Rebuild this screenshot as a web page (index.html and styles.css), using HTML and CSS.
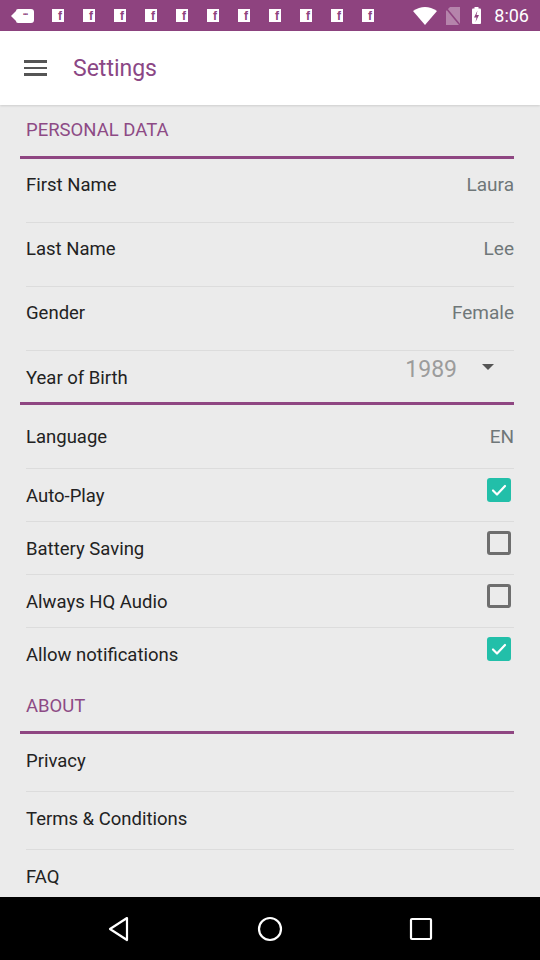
FILE: index.html
```html
<!DOCTYPE html>
<html>
<head>
<meta charset="utf-8">
<link rel="stylesheet" href="styles.css">
</head>
<body>
<div class="screen">
  <div class="statusbar">
    <div class="sb-left">
      <span class="bubble"><span class="dots">•••</span></span>
      <span class="fb">f</span><span class="fb">f</span><span class="fb">f</span><span class="fb">f</span><span class="fb">f</span><span class="fb">f</span><span class="fb">f</span><span class="fb">f</span><span class="fb">f</span><span class="fb">f</span><span class="fb">f</span>
    </div>
    <div class="sb-right">
      <svg class="wifi" width="24" height="18" viewBox="0 0 24 18"><path d="M0 4 Q12 -4 24 4 L12 18 Z" fill="#fff"/></svg>
      <svg class="sim" width="14" height="18" viewBox="0 0 14 18"><path d="M4 0 H14 V18 H0 V4 Z" fill="#fff" fill-opacity="0.35"/><path d="M0 1 L14 18" stroke="#8e437f" stroke-width="1.6"/></svg>
      <svg class="batt" width="9" height="17" viewBox="0 0 9 17"><rect x="2.5" y="0" width="4" height="2" fill="#fff"/><rect x="0" y="1.5" width="9" height="15.5" rx="1" fill="#fff"/><path d="M5.5 3.5 L2 10.5 H4.5 L3.5 15 L7 8 H4.5 Z" fill="#8e437f"/></svg>
      <span class="time">8:06</span>
    </div>
  </div>

  <div class="toolbar">
    <div class="hamburger"><span></span><span></span><span></span></div>
    <div class="title">Settings</div>
  </div>

  <div class="content">
    <div class="section-head">PERSONAL DATA</div>
    <div class="row r64"><span class="label">First Name</span><span class="value">Laura</span></div>
    <div class="row r64"><span class="label">Last Name</span><span class="value">Lee</span></div>
    <div class="row r64"><span class="label">Gender</span><span class="value">Female</span></div>
    <div class="row year">
      <span class="label">Year of Birth</span>
      <span class="year-val">1989</span>
      <span class="caret"></span>
    </div>
    <div class="row lang"><span class="label">Language</span><span class="value">EN</span></div>
    <div class="row check"><span class="label">Auto-Play</span><span class="box on"><svg width="24" height="24" viewBox="0 0 24 24"><path d="M6 12.5 L10 16.5 L18 8" fill="none" stroke="#fff" stroke-width="2.2" stroke-linecap="round" stroke-linejoin="round"/></svg></span></div>
    <div class="row check"><span class="label">Battery Saving</span><span class="box off"></span></div>
    <div class="row check"><span class="label">Always HQ Audio</span><span class="box off"></span></div>
    <div class="row check last"><span class="label">Allow notifications</span><span class="box on"><svg width="24" height="24" viewBox="0 0 24 24"><path d="M6 12.5 L10 16.5 L18 8" fill="none" stroke="#fff" stroke-width="2.2" stroke-linecap="round" stroke-linejoin="round"/></svg></span></div>
    <div class="section-head about">ABOUT</div>
    <div class="row link"><span class="label">Privacy</span></div>
    <div class="row link"><span class="label">Terms &amp; Conditions</span></div>
    <div class="row link last"><span class="label">FAQ</span></div>
  </div>

  <div class="navbar">
    <svg width="24" height="26" viewBox="0 0 24 26"><path d="M20 2 L3 13 L20 24 Z" fill="none" stroke="#fff" stroke-width="2.2" stroke-linejoin="round"/></svg>
    <svg width="26" height="26" viewBox="0 0 26 26"><circle cx="13" cy="13" r="11" fill="none" stroke="#fff" stroke-width="2.2"/></svg>
    <svg width="24" height="24" viewBox="0 0 24 24"><rect x="2" y="2" width="20" height="20" rx="1" fill="none" stroke="#fff" stroke-width="2.2"/></svg>
  </div>
</div>
</body>
</html>
```

FILE: styles.css
```css
* { box-sizing: border-box; }
html, body { margin: 0; padding: 0; }
body {
  width: 540px;
  height: 960px;
  overflow: hidden;
  font-family: Roboto, "Noto Sans", sans-serif;
  background: #ebebeb;
}
.screen {
  width: 540px;
  height: 960px;
  display: flex;
  flex-direction: column;
}
.statusbar {
  height: 31px;
  background: #8e437f;
  display: flex;
  align-items: center;
  justify-content: space-between;
  padding: 0 11px 0 12px;
  flex: none;
}
.sb-left { display: flex; align-items: center; gap: 19px; }
.bubble {
  position: relative;
  width: 18px;
  height: 14px;
  background: #fff;
  border-radius: 2px 3px 3px 2px;
  margin-left: 4px;
  margin-right: -1px;
  display: flex;
  align-items: center;
  justify-content: center;
}
.bubble::before {
  content: "";
  position: absolute;
  left: -5px;
  top: 2px;
  border-right: 5px solid #fff;
  border-top: 5px solid transparent;
  border-bottom: 5px solid transparent;
}
.dots { color: #8e437f; font-size: 7px; letter-spacing: -1px; line-height: 1; font-weight: bold; }
.fb {
  width: 12px;
  height: 13px;
  background: #fff;
  color: #8e437f;
  font-family: "Liberation Sans", sans-serif;
  font-weight: bold;
  font-size: 12px;
  line-height: 14px;
  text-align: right;
  padding-right: 2px;
}
.sb-right { display: flex; align-items: center; }
.wifi { margin-right: 9px; }
.sim { margin-right: 12px; }
.batt { margin-right: 13px; }
.time { color: #fff; font-size: 18px; }

.toolbar {
  height: 74px;
  background: #fff;
  display: flex;
  align-items: center;
  padding-left: 24px;
  flex: none;
  box-shadow: 0 1px 2px rgba(0,0,0,0.12);
  position: relative;
  z-index: 1;
}
.hamburger { width: 23px; display: flex; flex-direction: column; gap: 4px; margin-right: 26px; }
.hamburger span { display: block; height: 2.5px; background: #555; }
.title { color: #8b4785; font-size: 23px; }

.content {
  flex: 1;
  padding: 0 26px 0 20px;
  overflow: hidden;
}
.section-head {
  height: 54px;
  padding: 15px 0 0 6px;
  color: #8d4a85;
  font-size: 18.5px;
  line-height: 20px;
  border-bottom: 3px solid #8f4682;
}
.row {
  margin-left: 6px;
  display: flex;
  justify-content: space-between;
  align-items: flex-start;
  border-bottom: 1px solid #dcdcdc;
  font-size: 18.5px;
  line-height: 20px;
}
.label { color: #222; }
.value { color: #6f7779; font-size: 19px; }
.r64 { height: 64px; padding-top: 16px; }
.year {
  height: 54px;
  margin-left: 0;
  padding-left: 6px;
  border-bottom: 3px solid #8f4682;
  padding-top: 17px;
}
.year .label { flex: 1; }
.year-val {
  color: #9c9c9c;
  font-size: 23px;
  line-height: 24px;
  margin-top: -10px;
  margin-right: 25px;
}
.caret {
  margin-top: -4px;
  margin-right: 20px;
  width: 0;
  height: 0;
  border-left: 6px solid transparent;
  border-right: 6px solid transparent;
  border-top: 6px solid #555;
}
.lang { height: 64px; padding-top: 22px; }
.check { height: 53px; padding-top: 17px; }
.box {
  width: 24px;
  height: 24px;
  border-radius: 3px;
  margin-top: -8px;
  margin-right: 3px;
}
.box.on { background: #22bfa9; }
.box.off { border: 3px solid #6e6e6e; }
.last { border-bottom: none; }
.about { height: 53px; }
.link { height: 58px; padding-top: 17px; }

.navbar {
  height: 63px;
  background: #000;
  flex: none;
  display: flex;
  align-items: center;
  justify-content: center;
  gap: 126px;
}
```
